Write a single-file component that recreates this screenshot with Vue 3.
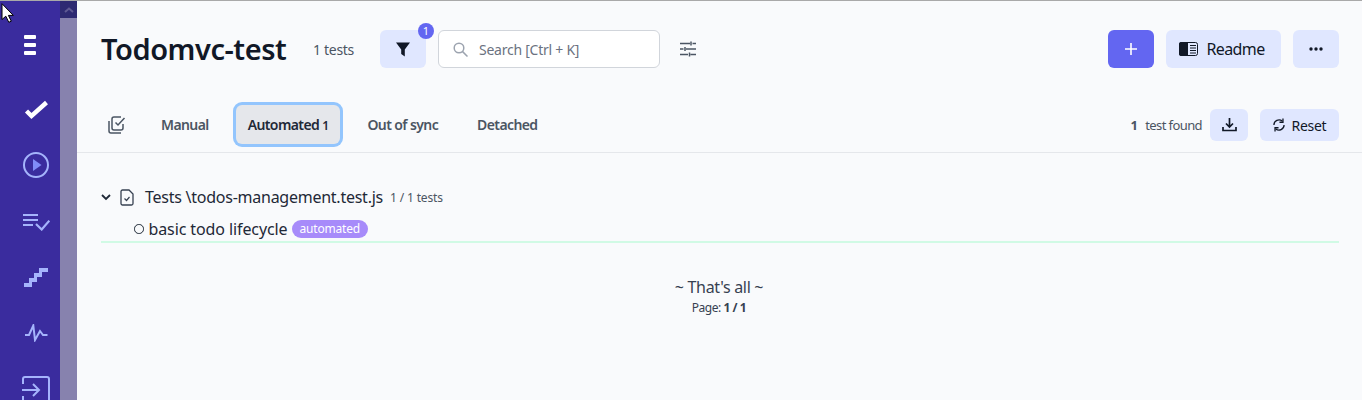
<script setup>
const tabs = [
  { label: 'Manual' },
  { label: 'Automated', count: '1', active: true },
  { label: 'Out of sync' },
  { label: 'Detached' },
]
</script>

<template>
  <div class="app">
    <aside class="rail">
      <div class="rail-icons">
        <div class="rail-item first">
          <svg width="14" height="22" viewBox="0 0 14 22"><rect x="1" y="1" width="12" height="4" rx="1" fill="#fff"/><rect x="1" y="9" width="12" height="4" rx="1" fill="#fff"/><rect x="1" y="17" width="12" height="4" rx="1" fill="#fff"/></svg>
        </div>
        <div class="rail-item check">
          <svg width="26" height="22" viewBox="0 0 26 22"><path d="M3.500 12l5 5L23.500 3.500" fill="none" stroke="#fff" stroke-width="4.400"/></svg>
        </div>
        <div class="rail-item">
          <svg width="28" height="28" viewBox="0 0 28 28"><circle cx="14" cy="14" r="12" fill="none" stroke="#a5b4fc" stroke-width="2"/><path d="M11 8v12l8.500-6z" fill="#818cf8"/></svg>
        </div>
        <div class="rail-item">
          <svg width="28" height="20" viewBox="0 0 28 20"><path d="M1 4h15M1 9h15M1 14h10" fill="none" stroke="#a5b4fc" stroke-width="2.200"/><path d="M14 13l5.700 5.500 7.600-8.800" fill="none" stroke="#a5b4fc" stroke-width="2.200"/></svg>
        </div>
        <div class="rail-item">
          <svg width="26" height="20" viewBox="0 0 26 20"><path d="M1 20V16H6V11H11V6H16V1H25V5H19V10H14V15H9V20Z" fill="#a5b4fc"/></svg>
        </div>
        <div class="rail-item">
          <svg width="24" height="18" viewBox="0 0 24 18"><path d="M1 11h4l4.300-9.500L11 16l5-9 3 4h4.500" fill="none" stroke="#a5b4fc" stroke-width="2"/></svg>
        </div>
        <div class="rail-item">
          <svg width="28" height="28" viewBox="0 0 28 28"><path d="M1 9V4a2 2 0 012-2h22a2 2 0 012 2v22a2 2 0 01-2 2H3a2 2 0 01-2-2v-5" fill="none" stroke="#a5b4fc" stroke-width="2"/><path d="M0 15h16M11 9l6 6-6 6" fill="none" stroke="#a5b4fc" stroke-width="2"/></svg>
        </div>
      </div>
    </aside>

    <div class="scrollbar">
      <div class="scroll-up">
        <svg width="10" height="6" viewBox="0 0 10 6"><path d="M1 5l4-3.500L9 5" fill="none" stroke="#5f5a93" stroke-width="2"/></svg>
      </div>
    </div>

    <main class="main">
      <header class="header">
        <h1 class="title">Todomvc-test</h1>
        <span class="count">1 tests</span>
        <button class="btn square filter">
          <svg width="14" height="15" viewBox="0 0 14 15"><path d="M0 .5h14L8.800 7.500V14.500L5.200 12V7.500z" fill="#111827"/></svg>
          <span class="badge">1</span>
        </button>
        <div class="search">
          <svg width="15" height="15" viewBox="0 0 15 15"><circle cx="6" cy="6" r="4.800" fill="none" stroke="#9ca3af" stroke-width="1.500"/><path d="M9.600 9.600L14.500 14.500" stroke="#9ca3af" stroke-width="1.500"/></svg>
          <span>Search [Ctrl + K]</span>
        </div>
        <svg class="sliders" width="16" height="16" viewBox="0 0 16 16"><path d="M0 2.500h10M12.500 2.500H16M11 .5v4M0 8h3.500M6 8h10M5 6v4M0 13.500h8M10.500 13.500H16M9.500 11.500v4" fill="none" stroke="#4b5563" stroke-width="1.500"/></svg>
        <div class="spacer"></div>
        <div class="actions">
          <button class="btn square primary">
            <svg width="12" height="12" viewBox="0 0 12 12"><path d="M6 0v12M0 6h12" stroke="#fff" stroke-width="1.600"/></svg>
          </button>
          <button class="btn readme">
            <svg width="19" height="14" viewBox="0 0 19 14"><rect x=".5" y=".5" width="18" height="13" rx="2" fill="#e0e7ff" stroke="#111827"/><path d="M2 0h7v14H2a2 2 0 01-2-2V2a2 2 0 012-2z" fill="#111827"/><path d="M11 3.500h6M11 6h6M11 8.500h6M11 11h6" stroke="#111827"/></svg>
            <span>Readme</span>
          </button>
          <button class="btn square">
            <svg width="14" height="4" viewBox="0 0 14 4"><circle cx="2" cy="2" r="1.700" fill="#111827"/><circle cx="7" cy="2" r="1.700" fill="#111827"/><circle cx="12" cy="2" r="1.700" fill="#111827"/></svg>
          </button>
        </div>
      </header>

      <nav class="tabs">
        <svg class="tabs-icon" width="18" height="18" viewBox="0 0 18 18"><path d="M1 5v10a2 2 0 002 2h10" fill="none" stroke="#4b5563" stroke-width="1.500"/><path d="M15 8v4a2 2 0 01-2 2H6a2 2 0 01-2-2V3a2 2 0 012-2h7" fill="none" stroke="#4b5563" stroke-width="1.500"/><path d="M7.500 6.500l2.500 2.500 6.500-7" fill="none" stroke="#4b5563" stroke-width="1.500"/></svg>
        <div v-for="t in tabs" :key="t.label" class="tab" :class="{ active: t.active }">
          {{ t.label }}<span v-if="t.count" class="tab-count">{{ t.count }}</span>
        </div>
        <div class="spacer"></div>
        <div class="found"><b>1</b><span>test found</span></div>
        <button class="btn small square-small">
          <svg width="15" height="14" viewBox="0 0 15 14"><path d="M7.500 0v8.500M4 5.500l3.500 3.500L11 5.500" fill="none" stroke="#111827" stroke-width="1.700"/><path d="M1 9v3.500h13V9" fill="none" stroke="#111827" stroke-width="1.700"/></svg>
        </button>
        <button class="btn small reset">
          <svg width="12" height="14" viewBox="0 0 13 14"><path d="M1 7a5.500 5.500 0 019-4.200M12 7a5.500 5.500 0 01-9 4.200" fill="none" stroke="#111827" stroke-width="1.400"/><path d="M10.800 0v4H7M2.200 14v-4H6" fill="none" stroke="#111827" stroke-width="1.400"/></svg>
          <span>Reset</span>
        </button>
      </nav>

      <section class="tree">
        <div class="folder">
          <svg width="10" height="7" viewBox="0 0 10 7"><path d="M1 1l4 4 4-4" fill="none" stroke="#1f2937" stroke-width="1.800"/></svg>
          <svg class="file" width="14" height="17" viewBox="0 0 14 17"><path d="M1 2.500A1.500 1.500 0 012.500 1H9l4 4v9.500a1.500 1.500 0 01-1.500 1.500h-9A1.500 1.500 0 011 14.500z" fill="none" stroke="#374151" stroke-width="1.300"/><path d="M4.500 9.500l2 2 3-3.500" fill="none" stroke="#374151" stroke-width="1.200"/></svg>
          <span class="folder-name">Tests \todos-management.test.js</span>
          <span class="folder-count">1 / 1 tests</span>
        </div>
        <div class="test">
          <span class="dot"></span>
          <span class="test-name">basic todo lifecycle</span>
          <span class="pill">automated</span>
        </div>
      </section>

      <footer class="end">
        <div class="end-title">~ That's all ~</div>
        <div class="end-page">Page: <b>1 / 1</b></div>
      </footer>
    </main>

    <svg class="cursor" width="13" height="20" viewBox="0 0 13 20"><path d="M1 .7V16.500L4.800 13.200 7.800 19.300 10.300 18.200 7.400 12.400H12.300z" fill="#fff" stroke="#000" stroke-width="1"/></svg>
  </div>
</template>

<style>
html, body { margin: 0; background: #f9fafc; overflow: hidden; }
</style>

<style scoped>
.app {
  display: flex;
  height: 399px;
  border-top: 1px solid #a9a9a9;
  overflow: hidden;
  font-family: "Noto Sans", "Open Sans", sans-serif;
  color: #111827;
  background: #f9fafc;
  position: relative;
}
.rail { width: 60px; flex: none; background: #3a2c9e; overflow: hidden; }
.rail-icons { display: flex; flex-direction: column; align-items: center; padding: 30px 0 0 12px; }
.rail-item { height: 28px; display: flex; align-items: center; justify-content: center; margin-bottom: 28px; flex: none; }
.rail-item.first { margin: 0 0 37px -12px; }
.rail-item.check { margin-bottom: 27px; }
.scrollbar { width: 17px; flex: none; background: #8782ae; }
.scroll-up { height: 17px; background: #2e2a72; display: flex; align-items: center; justify-content: center; }
.main { flex: 1; min-width: 0; }
.header { display: flex; align-items: center; height: 38px; padding: 29px 23px 0 24px; }
.title { margin: 0; font-size: 29px; font-weight: 600; letter-spacing: -0.45px; line-height: 38px; width: 186px; white-space: nowrap; }
.count { font-size: 14px; color: #4b5563; margin-left: 26px; width: 41px; letter-spacing: -0.3px; white-space: nowrap; }
.btn {
  border: 0; background: #e0e7ff; border-radius: 6px; color: #111827; padding: 0; font: inherit;
  display: flex; align-items: center; justify-content: center; position: relative;
}
.square { width: 46px; height: 38px; }
.filter { margin-left: 26px; }
.badge {
  position: absolute; top: -7px; right: -8px; width: 16px; height: 16px; border-radius: 50%;
  background: #6366f1; color: #fff; font-size: 11px; line-height: 16px; text-align: center;
}
.search {
  box-sizing: border-box; width: 222px; height: 38px; margin-left: 12px; border: 1px solid #d1d5db; border-radius: 6px; background: #fff;
  display: flex; align-items: center; padding-left: 14px; gap: 11px; font-size: 14px; color: #6b7280; letter-spacing: -0.25px;
}
.sliders { margin-left: 20px; }
.spacer { flex: 1; }
.actions { display: flex; gap: 12px; }
.primary { background: #6366f1; }
.readme { box-sizing: border-box; width: 115px; height: 38px; gap: 8px; padding-right: 3px; font-size: 16px; letter-spacing: -0.6px; }
.tabs { display: flex; align-items: center; height: 51px; padding-bottom: 2px; margin-top: 31px; padding-left: 31px; padding-right: 23px; border-bottom: 1px solid #e5e7eb; }
.tabs-icon { margin-right: 23px; }
.tab { font-size: 14px; font-weight: 600; color: #4b5563; padding: 0 12px; height: 39px; line-height: 39px; border-radius: 6px; letter-spacing: -0.6px; margin-right: 15px; white-space: nowrap; }
.tab.active { background: #e5e7eb; color: #1f2937; box-shadow: 0 0 0 3px #93c5fd; }
.tab-count { margin-left: 3px; font-size: 12px; }
.found { font-size: 13px; color: #4b5563; display: flex; gap: 8px; margin-right: 8px; letter-spacing: -0.6px; }
.small { height: 32px; margin-top: 1px; }
.square-small { width: 38px; margin-right: 12px; }
.reset { width: 79px; gap: 7px; font-size: 14px; letter-spacing: -0.3px; }
.tree { padding: 34px 23px 0 24px; }
.folder { display: flex; align-items: center; height: 20px; }
.file { margin-left: 9px; }
.folder-name { font-size: 16px; color: #1f2937; margin-left: 11px; letter-spacing: -0.25px; white-space: nowrap; }
.folder-count { font-size: 12px; color: #4b5563; margin-left: 7px; letter-spacing: -0.15px; }
.test { display: flex; align-items: center; height: 24px; margin-top: 10px; padding-left: 33px; border-bottom: 2px solid #d1fae5; }
.dot { width: 7.500px; height: 7.500px; border: 1.500px solid #1f2937; border-radius: 50%; box-sizing: content-box; }
.test-name { font-size: 16px; margin-left: 5px; color: #1f2937; letter-spacing: -0.1px; white-space: nowrap; }
.pill { font-size: 12px; color: #fff; background: #a78bfa; border-radius: 9px; padding: 0 8px; height: 18px; line-height: 18px; margin-left: 4px; letter-spacing: -0.2px; }
.end { text-align: center; padding: 33px 0 0; margin-left: -1px; }
.end-title { font-size: 16px; color: #374151; line-height: 22px; letter-spacing: -0.3px; }
.end-page { font-size: 12px; color: #374151; line-height: 20px; letter-spacing: -0.45px; }
.cursor { position: absolute; left: 1px; top: 2px; }
</style>
